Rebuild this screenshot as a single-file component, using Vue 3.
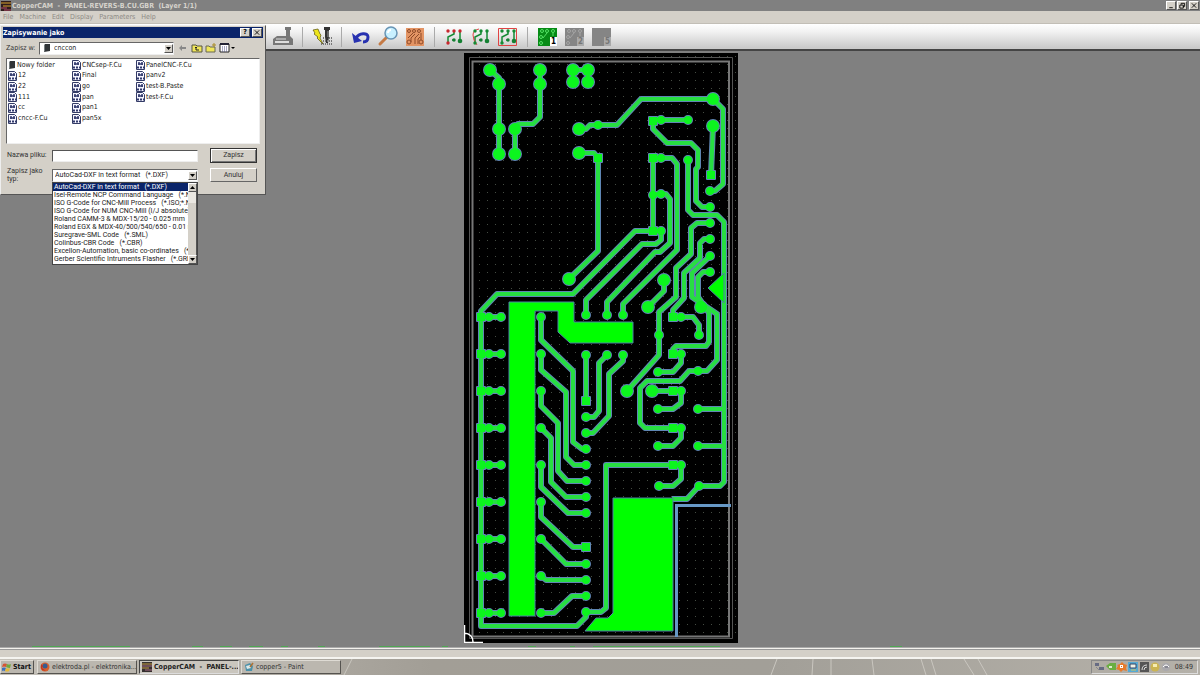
<script setup>
import { ref } from 'vue'

const menus = ['File', 'Machine', 'Edit', 'Display', 'Parameters', 'Help']
const files = ['Nowy folder', '12', '22', '111', 'cc', 'cncc-F.Cu', 'CNCsep-F.Cu', 'Final', 'go', 'pan', 'pan1', 'pan5x', 'PanelCNC-F.Cu', 'panv2', 'test-B.Paste', 'test-F.Cu']
const formats = [
  'AutoCad-DXF in text format\u00a0\u00a0 (*.DXF)',
  'Isel-Remote NCP Command Language\u00a0\u00a0 (*.NCP)',
  'ISO G-Code for CNC-Mill Process\u00a0\u00a0 (*.ISO;*.NC)',
  'ISO G-Code for NUM CNC-Mill (I/J absolute)',
  'Roland CAMM-3 & MDX-15/20 - 0.025 mm\u00a0\u00a0 (*.PRN)',
  'Roland EGX & MDX-40/500/540/650 - 0.01 mm',
  'Suregrave-SML Code\u00a0\u00a0 (*.SML)',
  'Colinbus-CBR Code\u00a0\u00a0 (*.CBR)',
  'Excellon-Automation, basic co-ordinates\u00a0\u00a0 (*.EXC)',
  'Gerber Scientific Intruments Flasher\u00a0\u00a0 (*.GRB)'
]
const format = ref(formats[0])
const fileName = ref('')

const traces = [
  '490,70 499,78 499,154',
  '540,70 540,117 533,124 518,124 515,129 515,154',
  '573,70 588,70', '573,70 573,82', '588,70 588,82',
  '579,129 586,129 590,125 617,125 641,99 713,99 723,109 723,184 715,191 710,191',
  '688,120 653,120 653,129 667,143 691,143 698,150 698,167 696,169 696,201 702,207 710,207',
  '688,160 688,210 693,215 717,215 724,222 724,482 720,486 699,486 687,499 672,499',
  '713,126 711,175',
  '579,153 594,153 598,158 598,251 569,279',
  '661,158 672,158 677,164 677,250 623,304 623,315',
  '653,158 653,231', '653,158 661,158',
  '653,194 666,194 670,199 670,243 660,252 655,252 607,302 607,315',
  '661,231 661,240 656,244 642,244 586,300 586,315',
  '661,231 635,231 573,294 497,294 481,311 481,626 577,626 586,617 586,612 601,612 606,608 606,465 681,465 681,479 673,486 659,486',
  '710,223 697,223 691,228 691,254 676,268 676,297 659,312 659,355 627,391',
  '710,239 704,239 700,243 700,258 684,273 684,298 673,310 673,317',
  '673,317 693,317 699,325 699,335',
  '710,256 692,273 692,297 717,314 717,360 707,371 689,371 680,381 647,381 640,388 640,423 645,428 681,428 681,438 673,446 658,446',
  '710,272 703,272 698,277 698,297 709,313 709,342 706,346 676,346 673,349 673,354 681,354 681,363 673,372 658,372',
  '664,280 664,291 648,307',
  '652,391 681,391 681,403 673,409 658,409',
  '698,409 724,409', '698,446 724,446',
  '586,355 586,401',
  '607,355 599,363 599,411 594,417 586,417',
  '623,355 623,361 609,374 609,416 593,433 586,433',
  '541,317 541,340 573,371 573,442 582,449 586,449',
  '541,354 541,370 566,392 566,457 574,465 586,465',
  '541,391 541,406 558,423 558,471 567,481 586,481',
  '541,428 551,438 551,482 566,497 586,497',
  '541,465 541,487 568,513 586,513',
  '541,502 541,517 573,547 586,547',
  '541,539 566,564 586,564',
  '541,576 546,580 586,580',
  '541,613 554,613 572,596 586,596'
]
const rows = [317, 354, 391, 428, 465, 502, 539, 576, 613]
rows.forEach(y => traces.push(`481,${y} 501,${y}`))

const list = (r, text) => text.split(' ').map(p => [...p.split(',').map(Number), r])
const pads = [
  ...list(6, '490,70 499,84 499,129 499,154 540,70 540,84 515,129 515,154 573,70 588,70 573,82 588,82 579,129 579,153 713,99 713,126 569,279 664,280 648,307 627,391 652,391 701,307'),
  ...list(4, '598,125 661,120 688,120 688,160 661,158 653,195 661,194 661,231 710,191 710,207 710,223 710,239 710,256 710,272 586,315 607,315 623,315 586,355 607,355 623,355 659,335 699,335 658,372 698,371 658,409 698,409 658,446 698,446 659,486 699,486 586,417 586,433 586,449 586,465 586,481 586,497 586,513 586,564 586,580 586,596 586,612'),
  ...list(4, '681,317 681,354 681,391 681,428 681,465'),
  ...rows.flatMap(y => [[489, y, 4], [501, y, 4], [541, y, 4]])
]
const squares = [
  ...list(4, '653,121 711,175 598,158 653,158 653,231 586,401 586,547'),
  ...list(4, '673,317 673,354 673,391 673,428 673,465'),
  ...rows.map(y => [481, y, 4])
]
const pours = [
  '509,302 574,302 574,322 633,322 633,343 570,343 558,332 558,311 535,311 535,616 509,616',
  '613,498 673,498 673,631 585,631 596,618 608,618 613,613',
  '708,288 724,273 724,303'
]
const strips = [[32, 130], [192, 203], [220, 232], [249, 263], [281, 288], [318, 325], [379, 430], [442, 448], [528, 536], [570, 575], [593, 720], [890, 902]]
</script>

<template>
  <div class="app">
    <header class="titlebar">
      <svg class="appicon" viewBox="0 0 10 10" aria-hidden="true"><path fill="#301c1c" d="M0 0h10v10H0z" /><path stroke="#d9a32f" d="M0 2h10M2 5h8" /><path stroke="#b44a6a" d="M0 7h6M3 9h7" /></svg>
      <h1>CopperCAM&nbsp; -&nbsp; PANEL-REVERS-B.CU.GBR&nbsp; (Layer 1/1)</h1>
      <div class="winbtns">
        <button aria-label="Minimize"><svg viewBox="0 0 8 8"><path d="M2 6.500h4" /></svg></button>
        <button aria-label="Restore"><svg viewBox="0 0 8 8"><path d="M3 3V1.500h4V5H5M1.500 3.500h4V7h-4z" /></svg></button>
        <button class="close" aria-label="Close"><svg viewBox="0 0 8 8"><path d="M1.500 1.500l5 5M6.500 1.500l-5 5" /></svg></button>
      </div>
    </header>

    <nav class="menubar"><button v-for="m in menus" :key="m">{{ m }}</button></nav>

    <div class="toolbar">
      <button aria-label="Mill"><svg viewBox="0 0 22 22"><path fill="#777" d="M13 1h6v3h-1v6h-4V4h-1zM1 13l4-3h13l3 3v6H1z" /><path fill="#aaa" d="M4 12h10v2H4z" /><path fill="#ddd" d="M3 15h14v2H3z" /></svg></button>
      <i class="sep"></i>
      <button aria-label="Run"><svg viewBox="0 0 22 22"><path fill="#ede51c" stroke="#554f10" stroke-width=".7" d="M2 4l5-1 2 5 1 1-1 3 3 6-6-6 1-1-4-3 1-1z" /><path fill="#333" d="M13 1h6v3h-1v7l-1 6h-2l-1-6V4h-1z" /><path stroke="#999" d="M17 5v6" /><path stroke="#777" stroke-width="2" stroke-dasharray="1 1" d="M10 18h11M12 15h9M12 12h2M18 12h3" /></svg></button>
      <i class="sep"></i>
      <button aria-label="Undo"><svg viewBox="0 0 22 22"><path fill="none" stroke="#2832b0" stroke-width="3" d="M6 12c3-5 12-6 12-1 0 4-2 5-5 5" /><path fill="#2832b0" d="M2 7l2 10 8-2z" /></svg></button>
      <button aria-label="Zoom"><svg viewBox="0 0 22 22"><path stroke="#c57a45" stroke-width="3" stroke-linecap="round" d="M3 18l7-7" /><circle cx="14" cy="7" r="6" fill="#c8f0ff" stroke="#6894b4" stroke-width="1.500" /><path fill="none" stroke="#fff" stroke-width="2" d="M11 7q0-3 3-3" /></svg></button>
      <button aria-label="Board"><svg viewBox="0 0 22 22"><path fill="#e39464" d="M2 2h18v18H2z" /><g fill="none" stroke="#8e4b29"><circle cx="5" cy="5" r="1.500" /><circle cx="10" cy="5" r="1.500" /><circle cx="15" cy="5" r="1.500" /><circle cx="5" cy="16" r="2" /><circle cx="17" cy="16" r="2" /><path d="M4 12l5-5M7 16V12l4-4M11 18v-6l4-4M14 18v-5l2-2M17 7v7" /></g></svg></button>
      <i class="sep"></i>
      <button v-for="k in 3" :key="k" :aria-label="'Contour ' + k"><svg viewBox="0 0 22 22"><path v-if="k === 3" fill="none" stroke="#e04444" d="M1.500 2.500h18v17h-18z" /><g fill="none" stroke="#168b34" stroke-width="1.500"><path d="M5 16V11l6-3V5M17 5v10M11 14h-2" /></g><path v-if="k === 2" fill="none" stroke="#e04444" d="M9 3Q3 4 3 9t4 10" /><g :fill="k === 1 ? '#c8262d' : '#168b34'"><circle cx="5" cy="5" r="1.700" /><circle cx="11" cy="5" r="1.700" /><circle cx="17" cy="5" r="1.700" /><circle cx="5" cy="17" r="1.700" /></g><g fill="#148032"><circle cx="11" cy="14" r="1.700" /><circle cx="17" cy="15" r="2.300" /></g></svg></button>
      <i class="sep"></i>
      <button v-for="k in [1, 2, 5]" :key="'l' + k" class="layer" :class="{ on: k === 1 }" :aria-label="'Layer ' + k"><svg viewBox="0 0 22 22"><path :fill="k === 1 ? '#078a16' : '#858585'" d="M2 2h19v18H2z" /><g v-if="k !== 5" fill="none" :stroke="k === 1 ? '#55e266' : '#a5a5a5'"><circle cx="6" cy="5" r="1.500" /><circle cx="11" cy="5" r="1.500" /><circle cx="17" cy="5" r="1.500" /><circle cx="5" cy="11" r="1.500" /><circle cx="5" cy="17" r="1.500" /><path d="M7 12l4-5M17 7v3" /></g></svg><b>{{ k }}</b></button>
    </div>

    <main class="work">
      <svg class="board" viewBox="464 53 274 590" role="img" aria-label="PCB layout">
        <defs><pattern id="grid" x="479" y="64" width="8" height="8" patternUnits="userSpaceOnUse"><path fill="#454c43" d="M0 0h1v1H0z" /></pattern></defs>
        <path d="M464 53h274v590H464z" />
        <path fill="url(#grid)" d="M474 56h264v580H474z" />
        <path class="frame" d="M469.500 57.500h263v581h-263z" />
        <path class="frame thick" d="M472.500 61.500h256.500v575H472.500z" />
        <g class="halo">
          <polyline v-for="t in traces" :key="t" :points="t" />
          <circle v-for="(p, i) in pads" :key="i" :cx="p[0]" :cy="p[1]" :r="p[2]" />
          <rect v-for="(s, i) in squares" :key="'s' + i" :x="s[0] - s[2]" :y="s[1] - s[2]" :width="2 * s[2]" :height="2 * s[2]" />
        </g>
        <g class="copper"><polyline v-for="t in traces" :key="t" :points="t" /></g>
        <g class="pads">
          <circle v-for="(p, i) in pads" :key="i" :cx="p[0]" :cy="p[1]" :r="p[2]" />
          <rect v-for="(s, i) in squares" :key="'s' + i" :x="s[0] - s[2]" :y="s[1] - s[2]" :width="2 * s[2]" :height="2 * s[2]" />
        </g>
        <polygon v-for="p in pours" :key="p" class="pour" :points="p" />
        <path fill="none" stroke="#6798c5" stroke-width="3" d="M731 505.500h-54.500V637" />
        <path fill="none" stroke="#fff" stroke-width="1.500" d="M464.500 625v17.500H483M464 633q9 1 9 9" />
      </svg>
    </main>
    <svg class="strip" viewBox="0 0 1200 1" preserveAspectRatio="none" aria-hidden="true"><rect v-for="s in strips" :key="s[0]" :x="s[0]" y="0" :width="s[1] - s[0]" height="1" /></svg>

    <div class="status"></div>

    <footer class="taskbar">
      <svg class="streaks" viewBox="0 0 1200 16" preserveAspectRatio="none" aria-hidden="true"><path d="M344 16l8-16M771 16l6-16M812 16l1-16M831 16V0M874 16l-2-16M926 16l-5-16M936 16l-5-16M974 16l-10-16M987 16l-9-16" /></svg>
      <button class="task start"><svg class="ticon" viewBox="0 0 10 10"><path fill="#d65333" d="M1 2q2-1 4 0L4 5Q2 4 0 5z" /><path fill="#71a83b" d="M5 2q2 1 4 0L8 6Q6 6 4 5z" /><path fill="#3c6fbd" d="M0 6q2-1 4 0L3 9Q1 8 0 9z" /><path fill="#e5b936" d="M4 6q2 1 4 0L7 9Q5 10 3 9z" /></svg>Start</button>
      <button class="task"><svg class="ticon" viewBox="0 0 10 10"><circle cx="5" cy="5" r="4.500" fill="#d7602d" /><circle cx="5" cy="4" r="2.500" fill="#365c91" /><path fill="#bb3426" d="M1 2l2 2-1 2 4 3-4-1-1-2z" /></svg>elektroda.pl - elektronika...</button>
      <button class="task active"><svg class="ticon" viewBox="0 0 10 10"><path fill="#36302f" d="M0 0h10v10H0z" /><path stroke="#c59c45" d="M0 2h10M0 6h7" /><path stroke="#a66b83" d="M0 4h10M3 8h7" /></svg>CopperCAM&nbsp; -&nbsp; PANEL-...</button>
      <button class="task"><svg class="ticon" viewBox="0 0 10 10"><path fill="#4b91aa" d="M1 3l5-2 3 3-1 5H2z" /><path fill="#dce9e9" d="M2 4l4-1 1 3-4 1z" /><path stroke="#ad7133" stroke-width="1.500" d="M6 5l3-4" /></svg>copper5 - Paint</button>
      <div class="tray">
        <svg viewBox="0 0 76 10" aria-hidden="true">
          <path fill="#666b83" d="M1 1h4v3H1zM5 5h5v3H5z" /><path stroke="#888" d="M2 5l3 3" />
          <path fill="#6aae42" d="M12 4l4-3h6v7h-6z" /><path fill="#dfeccd" d="M15 4h3v2h-3z" />
          <path fill="#e67b2c" d="M23 3l3-1 2-2 2 2 3 1-1 3 1 3-4-1-2 2-2-2-3-1 2-3z" /><path fill="#fff" d="M26 3h3v3h-3z" /><path fill="#d96624" d="M27 4h1v1h-1z" />
          <path fill="#56a9d4" d="M34 0h10v10H34z" /><path fill="#eef2e7" stroke="#346" d="M36 2h6v4h-6z" /><path stroke="#d1c659" d="M37 8h5" />
          <path fill="#555" d="M46 0h9v10h-9z" /><path fill="none" stroke="#ddd" d="M48 8q0-5 5-5M50 8q0-3 3-3" />
          <circle cx="61" cy="5" r="4.500" fill="#cbb453" /><path fill="#f5ecb2" d="M59 2h4v3h-4z" />
          <circle cx="72" cy="5" r="4" fill="#aaa9ad" /><path fill="none" stroke="#fff" d="M69 5q3-4 6 0" /><path stroke="#66687b" d="M71 5h3" />
        </svg>
        <time>08:49</time>
      </div>
    </footer>

    <section class="dialog" role="dialog" aria-label="Zapisywanie jako">
      <div class="dtitle"><h2>Zapisywanie jako</h2>
        <div class="winbtns">
          <button aria-label="Help"><b>?</b></button>
          <button class="close" aria-label="Close"><svg viewBox="0 0 8 8"><path d="M1.500 1.500l5 5M6.500 1.500l-5 5" /></svg></button>
        </div>
      </div>
      <div class="where">
        <label for="dir">Zapisz w:</label>
        <div class="combo dir">
          <svg class="fold" viewBox="0 0 8 10" aria-hidden="true"><path fill="#303437" d="M2 1h5v7l-6 1z" /><path fill="#777e80" d="M1 2l1-1v7l-1 1z" /></svg>
          <select id="dir"><option>cnccon</option></select><span class="arrow"><svg viewBox="0 0 7 7"><path d="M1 2h5L3.500 5z" /></svg></span>
        </div>
        <div class="navbtns">
          <button aria-label="Back"><svg viewBox="0 0 12 10"><path fill="#888" d="M2 5l3-3v2h4v2H5v2z" /></svg></button>
          <button aria-label="Up"><svg viewBox="0 0 12 10"><path fill="#f0e65a" stroke="#554" d="M1 2h4l1 1h5v6H1z" /><path fill="none" stroke="#222" d="M4 5l1-1 1 1M5 4v3h3" /></svg></button>
          <button aria-label="New folder"><svg viewBox="0 0 12 10"><path fill="#f0e65a" stroke="#665" d="M1 3h3l1 1h5v5H1z" /><path stroke="#a98c24" d="M9 0v4M7 2h4" /></svg></button>
          <button class="view" aria-label="View"><svg viewBox="0 0 16 10"><path fill="#fff" stroke="#222" d="M1 1h9v8H1z" /><path stroke="#223" stroke-width="2" d="M1 1h9" /><path stroke="#558" stroke-dasharray="1 1" d="M3 4h6M3 6h6M3 8h6" /><path d="M12 4h4l-2 2z" /></svg></button>
        </div>
      </div>
      <div class="files">
        <button v-for="(f, i) in files" :key="f">
          <svg v-if="i === 0" class="fold" viewBox="0 0 8 10"><path fill="#303437" d="M2 1h5v7l-6 1z" /><path fill="#777e80" d="M1 2l1-1v7l-1 1z" /></svg>
          <svg v-else class="doc" viewBox="0 0 9 10"><path fill="#f5f5ff" stroke="#333b66" d="M.5.500h6l2 2v7h-8z" /><path stroke="#30386c" stroke-width="1.500" d="M3 2v3M6 2v3M2 4h5" /><path stroke="#30386c" stroke-width="2" stroke-dasharray="2 1" d="M1 7.500h7" /></svg>{{ f }}
        </button>
      </div>
      <div class="form">
        <label for="name">Nazwa pliku:</label>
        <input id="name" v-model="fileName" type="text">
        <button class="push default">Zapisz</button>
        <label for="type">Zapisz jako typ:</label>
        <div class="combo type">
          <select id="type" v-model="format"><option v-for="f in formats" :key="f">{{ f }}</option></select><span class="arrow"><svg viewBox="0 0 7 7"><path d="M1 2h5L3.500 5z" /></svg></span>
          <div class="popup">
            <select v-model="format" size="10" aria-label="Zapisz jako typ"><option v-for="f in formats" :key="f">{{ f }}</option></select>
            <div class="scroll" aria-hidden="true"><span class="arrow"><svg viewBox="0 0 7 7"><path d="M1 5h5L3.500 2z" /></svg></span><span class="thumb"></span><span class="arrow"><svg viewBox="0 0 7 7"><path d="M1 2h5L3.500 5z" /></svg></span></div>
          </div>
        </div>
        <button class="push">Anuluj</button>
      </div>
    </section>
  </div>
</template>

<style>
html, body { margin: 0; overflow: hidden; background: #808080; }
</style>

<style scoped>
* { box-sizing: border-box; }
.app { position: relative; display: flex; flex-direction: column; height: 100vh; font: 7px/9px "DejaVu Sans Condensed", "DejaVu Sans", sans-serif; color: #333; }
button, input, select { margin: 0; padding: 0; border: 0; border-radius: 0; font: inherit; color: inherit; background: none; outline: 0; }
h1, h2 { margin: 0; font-size: 7px; line-height: 10px; white-space: nowrap; }
svg { display: block; }
.titlebar { display: flex; align-items: center; height: 11px; padding: 0 1px 0 1px; background: #808080; color: #d6d3cc; }
.appicon { width: 10px; height: 10px; margin-right: 1px; }
.winbtns { display: flex; gap: 1px; margin-left: auto; }
.winbtns button { display: flex; align-items: center; justify-content: center; width: 10px; height: 9px; background: #d4d0c8; border: 1px solid; border-color: #fff #555 #555 #fff; color: #000; line-height: 7px; }
.winbtns svg { width: 8px; height: 7px; fill: none; stroke: #000; }
.winbtns .close { margin-left: 1px; }
.menubar { display: flex; align-items: center; gap: 6px; height: 13px; padding-left: 3px; background: #d4d0c8; color: #8d8a85; border-bottom: 1px solid #c2beb6; }
.toolbar { display: flex; align-items: center; gap: 5px; height: 27px; padding-left: 272px; background: linear-gradient(#fff, #f2f2f2 30%, #cacaca 94%); border-bottom: 2px solid #444; }
.toolbar button { position: relative; width: 22px; height: 22px; }
.toolbar svg { width: 22px; height: 22px; }
.sep { width: 7px; height: 20px; background: linear-gradient(#aaa, #aaa) center / 1px 100% no-repeat; }
.layer b { position: absolute; right: 1px; bottom: 2px; width: 7px; background: #aaa; color: #777; font-size: 8px; line-height: 9px; }
.layer.on b { background: #fff; color: #000; }
.work { flex: 1; padding: 2px 0 0 2px; background: #808080; }
.strip { width: 100%; height: 1px; fill: #4fa653; }
.board { width: 274px; height: 590px; margin: 0 auto; }
.frame { fill: none; stroke: #555; }
.thick { stroke: #777; stroke-width: 2; }
.halo, .copper { fill: none; stroke-linejoin: round; }
.halo { stroke: #5f86b4; stroke-width: 6; }
.halo circle, .halo rect { stroke-width: 2; }
.copper { stroke: #27de42; stroke-width: 4; }
.pads { fill: #0cf51e; }
.pour { fill: #0f0; stroke: #4d83a5; }
.status { height: 12px; background: #d4d0c8; border-top: 1px solid #aaa; border-bottom: 2px solid #f5f4f0; box-shadow: inset 0 1px #f4f2ed, inset 0 2px #999; }
.taskbar { position: relative; display: flex; align-items: center; gap: 2px; height: 16px; padding: 0 2px 0 0; background: linear-gradient(90deg, #c5c1b9, #a29e96 36%, #a29f98 64%, #b5b1a9); }
.streaks { position: absolute; inset: 0; width: 100%; height: 100%; fill: none; stroke: #c9c6bf; stroke-width: 1; }
.task { position: relative; display: flex; align-items: center; gap: 2px; width: 100px; height: 14px; padding-left: 2px; background: #bbb7af; border: 1px solid; border-color: #dedbd4 #55534f #55534f #dedbd4; white-space: nowrap; overflow: hidden; }
.start { width: 34px; padding-left: 1px; gap: 1px; font-weight: bold; color: #111; margin-right: 1px; }
.active { font-weight: bold; color: #222; background: #cac6be; border-color: #444 #ddd #ddd #444; }
.ticon { flex: none; width: 10px; height: 10px; }
.tray { position: relative; display: flex; align-items: center; gap: 5px; height: 14px; margin-left: auto; padding: 0 4px 0 2px; border: 1px solid; border-color: #888 #ddd #ddd #888; }
.tray svg { width: 76px; height: 10px; }
.dialog { position: absolute; left: 0; top: 25px; width: 266px; padding: 1px 2px 11px; background: #d4d0c8; border: 1px solid; border-color: #eee #555 #555 #eee; }
.dtitle { display: flex; align-items: center; height: 11px; padding-right: 1px; background: #0a246a; color: #fff; }
.where { display: flex; align-items: center; height: 20px; padding-left: 3px; }
.where label { width: 33px; }
.combo { display: flex; align-items: center; background: #fff; border: 1px solid; border-color: #666 #eee #eee #666; color: #222; }
.combo select { flex: 1; min-width: 0; appearance: none; }
.dir { width: 135px; height: 13px; padding-left: 3px; }
.dir select { padding-left: 3px; }
.arrow { display: flex; align-items: center; justify-content: center; flex: none; width: 9px; height: 9px; background: #d4d0c8; border: 1px solid; border-color: #fff #555 #555 #fff; }
.arrow svg { width: 7px; height: 7px; }
.fold { flex: none; width: 8px; height: 10px; }
.navbtns { display: flex; gap: 2px; margin-left: 3px; }
.navbtns svg { width: 12px; height: 10px; }
.navbtns .view svg { width: 16px; }
.files { display: grid; grid-template-rows: repeat(6, 1fr); grid-template-columns: repeat(3, 64px); grid-auto-flow: column; height: 86px; padding: 1px 1px 19px; margin: 0 3px; background: #fff; border: 1px solid; border-color: #666 #eee #eee #666; color: #222; }
.files button { display: flex; align-items: center; gap: 1px; white-space: nowrap; min-height: 0; }
.files .doc { flex: none; width: 9px; height: 10px; }
.form { display: grid; grid-template-columns: 45px 146px 58px; row-gap: 4px; padding: 4px 0 0 4px; align-items: center; font-family: Roboto, "Liberation Sans", sans-serif; }
.form label { width: 36px; white-space: nowrap; }
.form label[for="type"] { white-space: normal; line-height: 8px; }
.form input { height: 12px; background: #fff; border: 1px solid; border-color: #555 #eee #eee #555; }
.push { width: 47px; height: 14px; margin-left: 12px; background: #d4d0c8; border: 1px solid; border-color: #fff #666 #666 #fff; text-align: center; }
.default { height: 15px; border-color: #333; box-shadow: inset 1px 1px #fff, inset -1px -1px #777; }
.type { position: relative; height: 13px; padding-left: 2px; }
.popup { position: absolute; left: -1px; top: 12px; right: -1px; display: flex; height: 83px; background: #fff; border: 1px solid #444; z-index: 2; }
.popup select { height: 81px; overflow: hidden; scrollbar-width: none; background: #fff; }
.popup option { min-height: 8px; height: 8px; padding: 0 1px; line-height: 8px; color: #222; white-space: pre; overflow: hidden; }
.popup option:checked { background: linear-gradient(#0a246a, #0a246a); color: #fff; }
.scroll { display: flex; flex-direction: column; width: 9px; background: #eae7e1; }
.thumb { flex: 1; background: linear-gradient(#eae7e1 11px, #d4d0c8 11px); border-right: 1px solid #555; }
</style>
